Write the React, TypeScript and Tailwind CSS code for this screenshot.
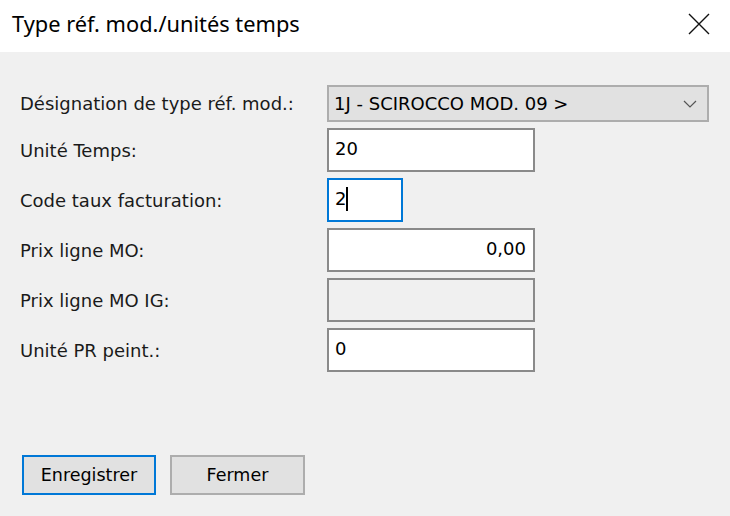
import React from "react";

const uiFont = { fontFamily: '"DejaVu Sans", Tahoma, sans-serif' };
const titleFont = { fontFamily: '"Noto Sans", "Open Sans", sans-serif' };

function Row({ label, children }: { label: string; children: React.ReactNode }) {
  return (
    <div className="flex items-center">
      <span className="w-[307px] shrink-0 text-[18px] text-[#1a1a1a]">{label}</span>
      {children}
    </div>
  );
}

function Field({
  value = "",
  width = "w-[208px]",
  align = "text-left",
  disabled = false,
  focused = false,
}: {
  value?: string;
  width?: string;
  align?: string;
  disabled?: boolean;
  focused?: boolean;
}) {
  const border = focused ? "border-[#0078d7]" : "border-[#8a8a8a]";
  const bg = disabled ? "bg-[#f0f0f0]" : "bg-white";
  return (
    <div
      className={`h-[44px] ${width} ${bg} border-2 ${border} flex items-center pl-[6px] pr-[7px] ${align} text-[18px] text-black`}
    >
      <span className="flex-1 -mt-[4px]">
        {value}
        {focused && <span className="inline-block w-[1.5px] h-[24px] bg-black align-middle -mt-[2px]" />}
      </span>
    </div>
  );
}

export default function App() {
  return (
    <div className="w-[730px] h-[516px] bg-[#f0f0f0] flex flex-col" style={uiFont}>
      <div className="h-[52px] bg-white flex items-center justify-between pl-3 pr-5">
        <span className="text-[21.8px] text-black -mt-[4px]" style={titleFont}>
          Type réf. mod./unités temps
        </span>
        <svg width="22" height="22" viewBox="0 0 22 22" className="-mt-[4px]">
          <path d="M1 1 L21 21 M21 1 L1 21" stroke="#111" strokeWidth="1.4" fill="none" />
        </svg>
      </div>

      <div className="flex flex-col gap-[6px] pl-5 pt-[33px]">
        <Row label="Désignation de type réf. mod.:">
          <div className="h-[37px] w-[382px] bg-[#e1e1e1] border-2 border-[#adadad] flex items-center justify-between pl-[5px] pr-[10px] text-[18px] text-black">
            <span>1J - SCIROCCO MOD. 09 &gt;</span>
            <svg width="14" height="8" viewBox="0 0 14 8">
              <path d="M1 1 L7 7 L13 1" stroke="#555" strokeWidth="1.2" fill="none" />
            </svg>
          </div>
        </Row>
        <Row label="Unité Temps:">
          <Field value="20" />
        </Row>
        <Row label="Code taux facturation:">
          <Field value="2" width="w-[76px]" focused />
        </Row>
        <Row label="Prix ligne MO:">
          <Field value="0,00" align="text-right" />
        </Row>
        <Row label="Prix ligne MO IG:">
          <Field disabled />
        </Row>
        <Row label="Unité PR peint.:">
          <Field value="0" />
        </Row>
      </div>

      <div className="flex gap-[14px] pl-[22px] mt-[83px]">
        <button className="h-[40px] w-[134px] bg-[#e1e1e1] border-2 border-[#0078d7] text-[17.5px] text-black">
          Enregistrer
        </button>
        <button className="h-[40px] w-[135px] bg-[#e1e1e1] border-2 border-[#adadad] text-[17.5px] text-black">
          Fermer
        </button>
      </div>
    </div>
  );
}
